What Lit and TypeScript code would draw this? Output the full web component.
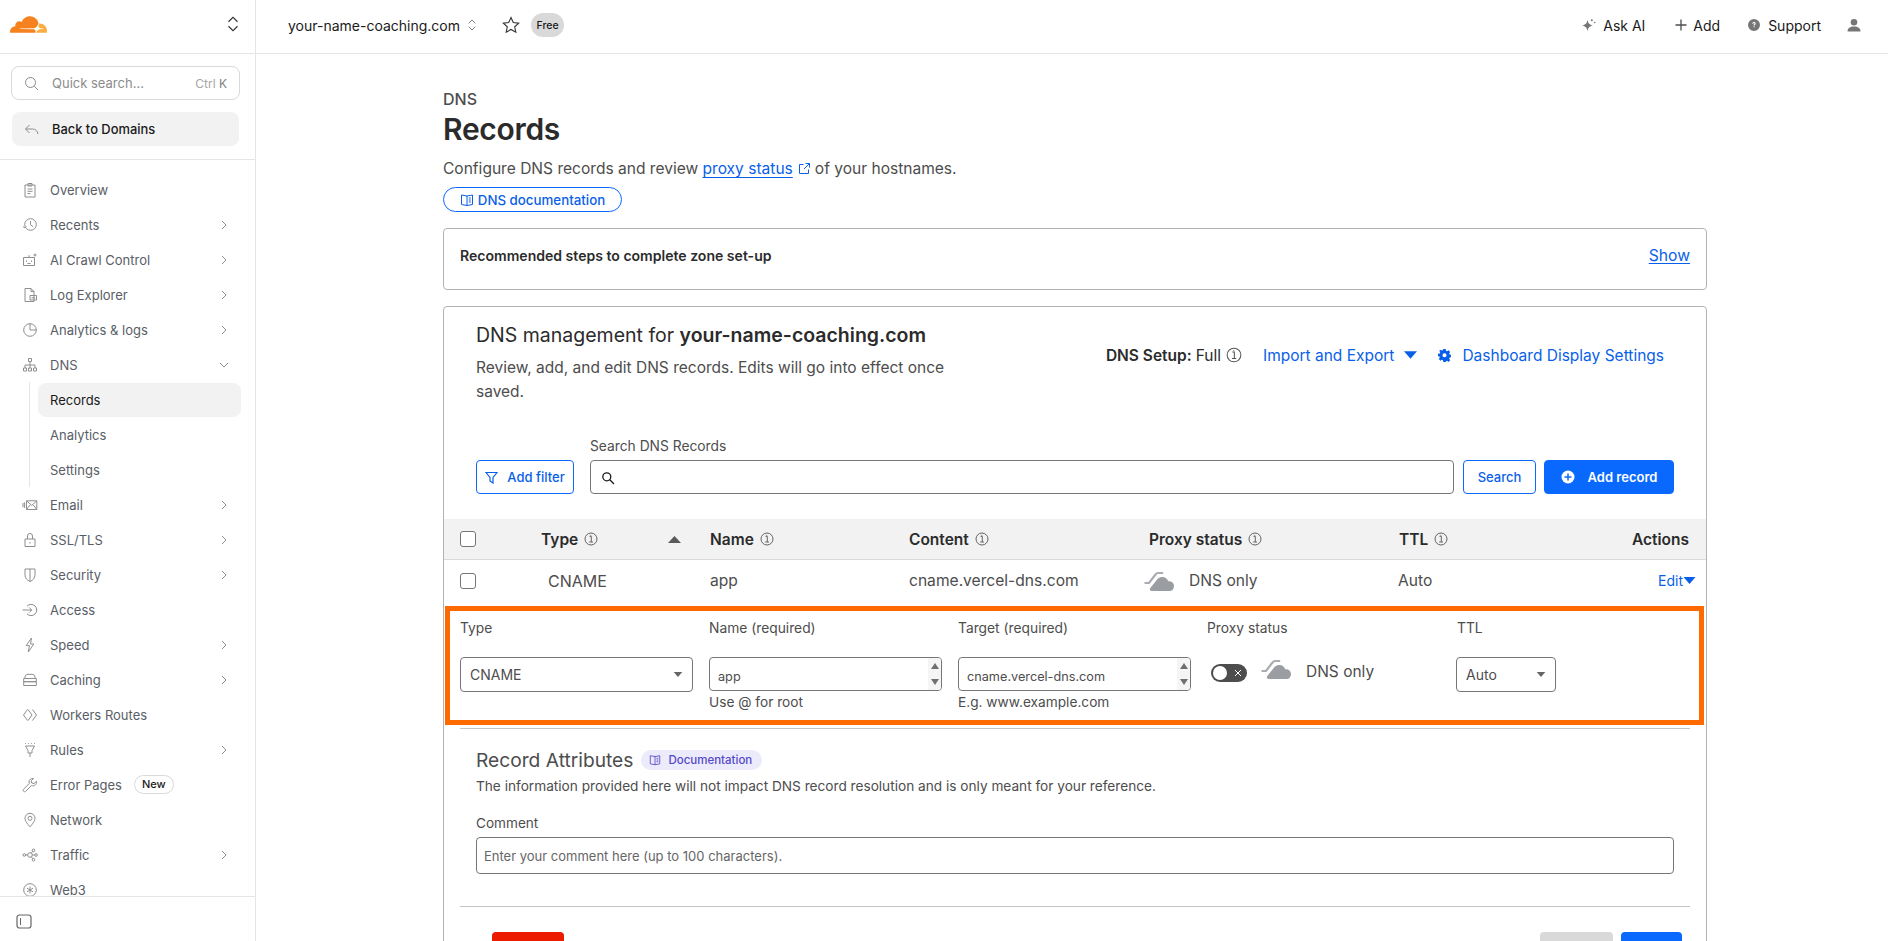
import { LitElement, html, css, svg } from 'lit';
import { customElement } from 'lit/decorators.js';

const navIcons: Record<string, unknown> = {
  overview: svg`<path d="M3 3h10v12H3zM6 1.500h4V4H6zM5.500 7h5M5.500 9.300h5M5.500 11.600h3"/>`,
  recents: svg`<circle cx="8.500" cy="7.500" r="5.800"/><path d="M8.500 4v3.800l2.600 1.800M1 9.500l1.800 1.400 1.600-1.600"/>`,
  ai: svg`<path d="M1.500 5.500h11v8h-11zM7 5.500V3.200M4.500 8.500v1.400M9.500 8.500v1.400M5.500 11.500h3M13 1.500v3M11.500 3h3"/>`,
  log: svg`<path d="M3 1.500h6l3 3v10H3zM9 1.500v3h3M8 8.500h6.500v4.500H8z"/><path d="M9.500 10.800h3.500"/>`,
  analytics: svg`<circle cx="8" cy="8" r="6.300"/><path d="M8 1.700V8h6.300"/>`,
  dns: svg`<path d="M6.500 1.500h3v3h-3zM8 4.500v3.500M3 11V8h10v3M8 8v3M1.500 11h3v3h-3zM6.500 11h3v3h-3zM11.500 11h3v3h-3z"/>`,
  email: svg`<path d="M4.500 3.800h10.300v8.700H4.500zM4.500 3.800l5.200 4.600 5.100-4.600M4.500 12.500l3.600-4.600M14.800 12.500l-3.600-4.600M1 6v4.200M2.600 5.300v5.600"/>`,
  ssl: svg`<path d="M3 7h10v7.500H3zM5.500 7V4a2.500 2.500 0 0 1 5 0v3M8 10v1.500"/>`,
  security: svg`<path d="M3 2h10v5.800c0 3.400-2.200 5.600-5 6.700-2.800-1.100-5-3.300-5-6.700zM8 2v12.500"/>`,
  access: svg`<path d="M5 4.200a5.600 5.600 0 1 1 0 7.600M.5 8h9M7.300 5.500 9.800 8l-2.500 2.500"/>`,
  speed: svg`<path d="M9.500 1 4.200 8.600h3.300L6.300 15l5.500-8H8.500z"/>`,
  caching: svg`<path d="M3 6.500V5c0-1.600 1.500-2.700 3-2.700h4c1.500 0 3 1.100 3 2.700v1.500zM1.700 6.500h12.600v3.200H1.700zM1.700 9.700h12.600v3.800H1.700z"/>`,
  workers: svg`<path d="m5.500 2.500-4 5.500 4 5.500M10.500 2.500l4 5.500-4 5.500M6 2.500 10 8l-4 5.500"/>`,
  rules: svg`<path d="M3.500 4h9L10 8.500V11H6V8.500zM8 11v4M3 1.500h.8M6 1.500h.8M9.200 1.500h.8M12.200 1.500h.8"/>`,
  error: svg`<path d="M14.500 4.200l-2.500 2.300-2.300-.5-.5-2.300 2.300-2.200c-2.300-.5-4.500 1.200-4.500 3.500 0 .6.100 1 .3 1.500l-5.700 5.700c-.6.600-.6 1.500 0 2.100s1.500.6 2.100 0l5.700-5.700c2.800 1 5.600-1.200 5.100-4.200z"/>`,
  network: svg`<path d="M8 14.800C5.500 11.800 3 9.300 3 6.300a5 5 0 0 1 10 0c0 3-2.500 5.500-5 8.500z"/><circle cx="8" cy="6.300" r="2"/>`,
  traffic: svg`<circle cx="2.300" cy="8" r="1.300"/><circle cx="8" cy="8" r="2.300"/><circle cx="11.500" cy="3.300" r="1.300"/><circle cx="11.500" cy="12.700" r="1.300"/><circle cx="14" cy="8" r="1.300"/><path d="M3.600 8h2.100M9.400 6.200l1.300-1.900M9.400 9.800l1.300 1.900M10.300 8h2.400"/>`,
  web3: svg`<circle cx="8" cy="8" r="6.300"/><path d="M8 4.500v7M5 6.200l6 3.600M11 6.200 5 9.800"/>`,
};

interface NavItem {
  icon: string;
  label: string;
  chevron?: boolean;
  badge?: string;
}

const navTop: NavItem[] = [
  { icon: 'overview', label: 'Overview' },
  { icon: 'recents', label: 'Recents', chevron: true },
  { icon: 'ai', label: 'AI Crawl Control', chevron: true },
  { icon: 'log', label: 'Log Explorer', chevron: true },
  { icon: 'analytics', label: 'Analytics & logs', chevron: true },
];

const navBottom: NavItem[] = [
  { icon: 'email', label: 'Email', chevron: true },
  { icon: 'ssl', label: 'SSL/TLS', chevron: true },
  { icon: 'security', label: 'Security', chevron: true },
  { icon: 'access', label: 'Access' },
  { icon: 'speed', label: 'Speed', chevron: true },
  { icon: 'caching', label: 'Caching', chevron: true },
  { icon: 'workers', label: 'Workers Routes' },
  { icon: 'rules', label: 'Rules', chevron: true },
  { icon: 'error', label: 'Error Pages', badge: 'New' },
  { icon: 'network', label: 'Network' },
  { icon: 'traffic', label: 'Traffic', chevron: true },
  { icon: 'web3', label: 'Web3' },
];

const info = html`<svg class="info" viewBox="0 0 14 14"><circle cx="7" cy="7" r="6"/><path d="M5.500 4.300h1.800v5.600M5.200 10h3.800M6.800 2.800v.7"/></svg>`;

const book = html`<svg class="book" viewBox="0 0 14 14"><path d="M7 3 1.500 2v9.500L7 12.500l5.500-1V2zM7 3v9.500M8.800 5h2M8.800 7h2M8.800 9h2"/></svg>`;

const grayCloud = html`<svg class="cloud" viewBox="0 0 32 22">
  <path d="M9 21c-2 0-2.800-1.700-1.700-3l6-7.500c1.500-2 3.200-3.500 6-3.500 3 0 5.200 2 6 4.300 3-.3 5.700 1.700 5.700 4.700 0 3-2 5-4.200 5z" fill="#9a9ea3"/>
  <path d="M1.500 13h4.500l6.500-8.500c.8-1 1.500-1.500 2.700-1.500h5" fill="none" stroke="#a9adb2" stroke-width="2.200"/>
</svg>`;

const caret = html`<svg class="caret" viewBox="0 0 12 7"><path d="M0 0h12L6 7z"/></svg>`;

@customElement('app-root')
export class AppRoot extends LitElement {
  static styles = css`
    :host {
      display: block;
      height: 941px;
      overflow: hidden;
      font-family: Inter, 'Noto Sans', sans-serif;
      color: #313131;
      background: #fff;
    }
    a {
      color: inherit;
      text-decoration: none;
    }
    .page {
      display: grid;
      grid-template-columns: 256px 1fr;
      height: 941px;
    }

    /* sidebar */
    .side {
      display: flex;
      flex-direction: column;
      height: 941px;
      border-right: 1px solid #e5e5e5;
      box-sizing: border-box;
    }
    .side-head {
      height: 54px;
      flex: none;
      box-sizing: border-box;
      border-bottom: 1px solid #e5e5e5;
      display: flex;
      align-items: center;
      justify-content: space-between;
      padding: 0 15px 5px 10px;
    }
    .logo {
      width: 37px;
      height: 17px;
    }
    .updown {
      width: 14px;
      height: 18px;
      fill: none;
      stroke: #333;
      stroke-width: 1;
    }
    .side-tools {
      flex: none;
      box-sizing: border-box;
      height: 106px;
      border-bottom: 1px solid #e5e5e5;
      padding: 12px 15px 0 11px;
    }
    .quick {
      box-sizing: border-box;
      height: 34px;
      border: 1px solid #d9d9d9;
      border-radius: 8px;
      display: flex;
      align-items: center;
      padding: 0 12px;
      font-size: 13px;
      color: #8c8c8c;
    }
    .quick svg,
    .back svg {
      width: 15px;
      height: 15px;
      fill: none;
      stroke: #8c8c8c;
      stroke-width: 1;
      flex: none;
      margin-right: 13px;
    }
    .quick .keys {
      margin-left: auto;
      font-size: 12px;
      color: #a6a6a6;
    }
    .quick .keys b {
      font-weight: 400;
      color: #808080;
    }
    .back {
      box-sizing: border-box;
      margin: 12px 1px 0 1px;
      height: 34px;
      background: #f2f2f2;
      border-radius: 8px;
      display: flex;
      align-items: center;
      padding: 0 12px;
      font-size: 12.900px;
      font-weight: 500;
      color: #1a1a1a;
    }
    .nav {
      flex: 1;
      min-height: 0;
      overflow: hidden;
      padding-top: 12px;
    }
    .item {
      height: 35px;
      display: flex;
      align-items: center;
      padding: 0 27px 0 22px;
      font-size: 13px;
      color: #595e66;
      box-sizing: border-box;
    }
    .item .ico {
      width: 16px;
      height: 16px;
      flex: none;
      margin-right: 12px;
      fill: none;
      stroke: #8e8e8e;
      stroke-width: 1;
    }
    .item .chev {
      width: 8px;
      height: 12px;
      margin-left: auto;
      fill: none;
      stroke: #8e8e8e;
      stroke-width: 1;
    }
    .item .chev.down {
      width: 12px;
      height: 8px;
      margin-right: -2px;
    }
    .new {
      margin-left: 12px;
      height: 19px;
      box-sizing: border-box;
      padding: 0 7px;
      border: 1px solid #d9d9d9;
      border-radius: 10px;
      font-size: 11px;
      font-weight: 500;
      line-height: 17px;
      color: #1a1a1a;
    }
    .sub {
      margin-left: 29px;
      border-left: 1px solid #e5e5e5;
      display: flex;
      flex-direction: column;
      height: 105px;
      box-sizing: border-box;
      padding-top: 1px;
    }
    .sub a {
      flex: none;
      height: 35px;
      margin-left: 8px;
      margin-right: 14px;
      padding-left: 12px;
      display: flex;
      align-items: center;
      font-size: 13px;
      color: #595e66;
      border-radius: 8px;
      box-sizing: border-box;
    }
    .sub a.on {
      height: 34px;
      background: #f2f2f2;
      color: #1a1a1a;
    }
    .side-foot {
      flex: none;
      height: 45px;
      border-top: 1px solid #e5e5e5;
      padding: 17px 0 0 16px;
      box-sizing: border-box;
    }
    .side-foot svg {
      display: block;
      width: 16px;
      height: 15px;
      fill: none;
      stroke: #666;
      stroke-width: 1;
    }

    /* top bar */
    .right {
      min-width: 0;
      height: 941px;
      overflow: hidden;
    }
    .top {
      height: 54px;
      box-sizing: border-box;
      border-bottom: 1px solid #e5e5e5;
      display: flex;
      align-items: center;
      padding: 0 27px 3px 32px;
      font-size: 14px;
      color: #1a1a1a;
    }
    .top .updown {
      width: 10px;
      height: 14px;
      margin-left: 7px;
      stroke: #666;
    }
    .star {
      width: 18px;
      height: 18px;
      margin-left: 25px;
      fill: none;
      stroke: #333;
      stroke-width: 1.100;
    }
    .free {
      margin-left: 11px;
      width: 33px;
      height: 24px;
      border-radius: 12px;
      background: #d9d9d9;
      display: flex;
      align-items: center;
      justify-content: center;
      font-size: 10.500px;
      font-weight: 500;
    }
    .top-links {
      margin-left: auto;
      display: flex;
      align-items: center;
    }
    .top-links a {
      display: flex;
      align-items: center;
    }
    .top-links svg {
      width: 14px;
      height: 14px;
      margin-right: 7px;
      fill: #767676;
    }
    .top-links .plain {
      margin-right: 5px;
      fill: none;
      stroke: #4d4d4d;
      stroke-width: 1.300;
    }
    .top-links a + a {
      margin-left: 27px;
    }
    .top-links a.add {
      margin-left: 29px;
    }
    .top-links .user {
      margin: 0 0 0 26px;
    }

    /* content */
    .content {
      width: 1264px;
      margin-left: 187px;
    }
    .crumb {
      margin-top: 36px;
      font-size: 16px;
      font-weight: 500;
      line-height: 18px;
      color: #4d4d4d;
    }
    h1 {
      margin: 1px 0 0;
      font-size: 30px;
      line-height: 40px;
      font-weight: 600;
      color: #2b2b2b;
      letter-spacing: -0.3px;
    }
    .lead {
      margin: 9px 0 0;
      font-size: 15.550px;
      line-height: 22px;
      color: #4d4d4d;
    }
    .lead a {
      color: #0a5fe8;
      text-decoration: underline;
      text-underline-offset: 3px;
    }
    .lead .ext {
      width: 13px;
      height: 13px;
      margin: 0 4px 0 5px;
      vertical-align: -1px;
      fill: none;
      stroke: #0a5fe8;
      stroke-width: 1;
    }
    .pill {
      margin-top: 7px;
      display: flex;
      align-items: center;
      justify-content: center;
      width: 179px;
      height: 25px;
      box-sizing: border-box;
      border: 1px solid #0969ff;
      border-radius: 13px;
      color: #0a5fe8;
      font-size: 13.300px;
      font-weight: 500;
    }
    .book {
      width: 14px;
      height: 14px;
      flex: none;
      margin-right: 4px;
      fill: none;
      stroke: currentColor;
      stroke-width: 1;
    }
    .steps {
      margin-top: 16px;
      height: 62px;
      box-sizing: border-box;
      border: 1px solid #b3b3b3;
      border-radius: 4px;
      padding: 0 16px 8px;
      display: flex;
      justify-content: space-between;
      align-items: center;
      font-size: 14.050px;
      font-weight: 600;
      color: #2b2b2b;
    }
    .steps a {
      font-size: 15.700px;
      font-weight: 400;
      color: #0a5fe8;
      text-decoration: underline;
      text-underline-offset: 2px;
    }
    .card {
      margin-top: 16px;
      height: 800px;
      border: 1px solid #b3b3b3;
      border-radius: 4px;
      box-sizing: border-box;
    }
    .card-head {
      height: 90px;
      padding: 14px 42px 0 32px;
      box-sizing: border-box;
      display: flex;
      justify-content: space-between;
    }
    .card-head h2 {
      margin: 0;
      font-size: 19.500px;
      line-height: 28px;
      font-weight: 400;
      color: #2b2b2b;
    }
    .card-head h2 b {
      font-weight: 600;
    }
    .card-head p {
      margin: 7px 0 0;
      width: 490px;
      font-size: 15.500px;
      line-height: 24px;
      color: #4d4d4d;
    }
    .setup {
      margin-top: 23px;
      display: flex;
      align-items: center;
      font-size: 15.500px;
      height: 22px;
      color: #2b2b2b;
    }
    .setup b {
      font-weight: 600;
      margin-right: 4px;
    }
    .setup .info {
      width: 16px;
      height: 16px;
      margin-left: 5px;
    }
    .setup .lnk {
      color: #0a5fe8;
    }
    .setup .lnk.first {
      margin-left: 21px;
    }
    .setup .caret {
      width: 13px;
      height: 8px;
      margin: 0 21px 0 10px;
      fill: #0a5fe8;
    }
    .setup .gear {
      width: 13px;
      height: 13px;
      fill: #0a5fe8;
      margin-right: 11px;
    }
    .info {
      width: 14px;
      height: 14px;
      flex: none;
      fill: none;
      stroke: #555;
      stroke-width: 0.900;
    }
    .search-row {
      margin: 40px 0 0 32px;
      display: flex;
      align-items: flex-end;
    }
    .btn {
      box-sizing: border-box;
      height: 34px;
      border: 1px solid #0969ff;
      border-radius: 4px;
      display: flex;
      align-items: center;
      justify-content: center;
      color: #0a5fe8;
      font-size: 13px;
      font-weight: 500;
      background: #fff;
    }
    .btn.filter {
      width: 98px;
      margin-right: 16px;
    }
    .btn.filter svg {
      width: 13px;
      height: 13px;
      margin-right: 9px;
      fill: none;
      stroke: #0a5fe8;
      stroke-width: 1.200;
    }
    .search-field {
      width: 864px;
      margin-right: 9px;
    }
    .search-field label {
      display: block;
      font-size: 13.800px;
      line-height: 18px;
      margin-bottom: 5px;
      color: #4d4d4d;
    }
    .search-box {
      box-sizing: border-box;
      height: 34px;
      border: 1px solid #767676;
      border-radius: 4px;
      display: flex;
      align-items: center;
      padding: 2px 0 0 10px;
    }
    .search-box svg {
      width: 14px;
      height: 14px;
      fill: none;
      stroke: #1a1a1a;
      stroke-width: 1.300;
    }
    .btn.search {
      width: 73px;
      margin-right: 8px;
    }
    .btn.add {
      width: 130px;
      background: #0969ff;
      border-color: #0969ff;
      color: #fff;
      font-weight: 600;
    }
    .btn.add svg {
      width: 14px;
      height: 14px;
      margin-right: 13px;
    }
    .grid-row {
      display: grid;
      grid-template-columns: 81px 169px 199px 240px 250px 1fr;
      align-items: center;
      padding: 0 17px 0 16px;
      font-size: 15.600px;
    }
    .thead {
      margin-top: 25px;
      height: 40px;
      background: #f2f2f2;
      border-bottom: 1px solid #d9d9d9;
      font-weight: 600;
      color: #2b2b2b;
      font-size: 15.500px;
    }
    .thead span {
      display: flex;
      align-items: center;
    }
    .thead .info {
      margin-left: 6px;
    }
    .thead .sort {
      width: 13px;
      height: 7px;
      margin-left: 70px;
      fill: #595959;
    }
    .split {
      display: flex;
      align-items: center;
      justify-content: space-between;
    }
    .check {
      box-sizing: border-box;
      display: block;
      width: 16px;
      height: 16px;
      border: 1px solid #767676;
      border-radius: 3px;
      background: #fff;
    }
    .tbody {
      height: 41px;
      color: #4d4d4d;
    }
    .tbody .t {
      padding-left: 7px;
      font-size: 16px;
    }
    .tbody .proxy {
      display: flex;
      align-items: center;
      margin-left: -6px;
    }
    .tbody .split {
      margin-left: -1px;
    }
    .cloud {
      width: 32px;
      height: 22px;
      flex: none;
      margin-right: 14px;
    }
    .tbody .edit {
      margin-right: -7px;
      display: flex;
      align-items: center;
      font-size: 14px;
      color: #0a5fe8;
    }
    .tbody .edit .caret {
      width: 13px;
      height: 7px;
      fill: #0a5fe8;
    }

    /* marked region */
    .edit-box {
      margin: 5px 0 0 1px;
      width: 1259px;
      height: 119px;
      box-sizing: border-box;
      border: 5px solid #ff6a00;
      padding: 8px 0 0 10px;
      display: grid;
      grid-template-columns: 249px 249px 249px 250px 1fr;
      font-size: 13.800px;
      color: #4d4d4d;
    }
    .edit-box label {
      display: block;
      height: 18px;
      line-height: 18px;
      margin-bottom: 20px;
    }
    .select {
      box-sizing: border-box;
      width: 233px;
      height: 35px;
      border: 1px solid #767676;
      border-radius: 4px;
      display: flex;
      align-items: center;
      justify-content: space-between;
      padding: 0 9px;
      font-size: 14px;
    }
    .select.small {
      width: 100px;
      margin-left: -1px;
    }
    .select .caret {
      width: 10px;
      height: 5px;
      fill: #666;
    }
    .spin {
      box-sizing: border-box;
      width: 233px;
      height: 34px;
      border: 1px solid #767676;
      border-radius: 4px;
      display: flex;
      align-items: center;
      justify-content: space-between;
      padding: 4px 0 0 8px;
      font-size: 12.700px;
    }
    .arrows {
      align-self: stretch;
      margin-top: -4px;
      width: 13px;
      display: flex;
      flex-direction: column;
      justify-content: space-between;
      align-items: center;
      padding: 5px 0;
      box-sizing: border-box;
      background: #f5f5f5;
      border-radius: 0 3px 3px 0;
    }
    .arrows svg {
      width: 8px;
      height: 6px;
      fill: #707070;
    }
    .hint {
      margin-top: 2px;
      font-size: 13.700px;
      line-height: 18px;
    }
    .ctl {
      display: flex;
      align-items: flex-start;
      font-size: 15.500px;
      padding-left: 4px;
    }
    .toggle {
      box-sizing: border-box;
      width: 36px;
      height: 18px;
      margin-top: 7px;
      margin-right: 13px;
      border-radius: 9px;
      background: #4d4d4d;
      padding: 2px;
      display: flex;
      align-items: center;
      justify-content: space-between;
      flex: none;
    }
    .toggle i {
      width: 14px;
      height: 14px;
      border-radius: 7px;
      background: #fff;
    }
    .toggle svg {
      width: 8px;
      height: 8px;
      margin-right: 3px;
      stroke: #fff;
      stroke-width: 1;
    }
    .ctl .cloud {
      margin-top: 1px;
    }
    .ctl span {
      margin-top: 5px;
      line-height: 20px;
    }

    .rule {
      margin: 3px 16px 0;
      border-top: 1px solid #c4c4c4;
    }
    .rule.flush {
      margin-top: 0;
    }
    .attrs {
      padding: 19px 32px 0;
      height: 177px;
      box-sizing: border-box;
    }
    .attrs-title {
      display: flex;
      align-items: center;
      font-size: 19.200px;
      line-height: 24px;
      color: #4d4d4d;
    }
    .purple {
      margin-left: 8px;
      height: 20px;
      width: 121px;
      box-sizing: border-box;
      border-radius: 10px;
      background: #ecebfb;
      color: #5447c9;
      font-size: 11.500px;
      font-weight: 500;
      display: flex;
      align-items: center;
      padding-left: 8px;
    }
    .purple .book {
      width: 12px;
      height: 12px;
      margin-right: 7px;
    }
    .attrs p {
      margin: 4px 0 0;
      font-size: 13.650px;
      line-height: 20px;
      color: #4d4d4d;
    }
    .attrs label {
      display: block;
      margin-top: 18px;
      font-size: 13.600px;
      line-height: 18px;
      color: #4d4d4d;
    }
    .attrs .area {
      margin-top: 5px;
      box-sizing: border-box;
      width: 1198px;
      height: 37px;
      border: 1px solid #767676;
      border-radius: 4px;
      display: flex;
      align-items: center;
      padding: 0 7px;
      font-size: 13px;
      color: #666;
    }
    .actions {
      padding: 25px 24px 0 48px;
      display: flex;
    }
    .actions i {
      display: block;
      height: 60px;
      border-radius: 4px;
    }
    .actions .del {
      width: 72px;
      background: #ec1c00;
    }
    .actions .cancel {
      width: 73px;
      margin-left: auto;
      background: #d9d9d9;
    }
    .actions .save {
      width: 61px;
      margin-left: 8px;
      background: #0969ff;
    }
  `;

  renderItem(it: NavItem) {
    return html`<a class="item">
      <svg class="ico" viewBox="0 0 16 16">${navIcons[it.icon]}</svg>
      <span>${it.label}</span>
      ${it.badge ? html`<span class="new">${it.badge}</span>` : ''}
      ${it.chevron
        ? html`<svg class="chev" viewBox="0 0 8 12"><path d="m2 2 4 4-4 4"/></svg>`
        : ''}
    </a>`;
  }

  renderSidebar() {
    return html`<aside class="side">
      <div class="side-head">
        <svg class="logo" viewBox="0 6.500 24 11">
          <path fill="#f6821f" d="M16.5088 16.8447c.1475-.5068.0908-.9707-.1553-1.3154-.2246-.3164-.6045-.499-1.0615-.5205l-8.6592-.1123a.1559.1559 0 0 1-.1333-.0713c-.0283-.042-.0351-.0986-.021-.1553.0278-.084.1123-.1484.2036-.1562l8.7359-.1123c1.0351-.0489 2.1601-.8868 2.5537-1.9136l.499-1.3013c.0215-.0561.0293-.1128.0147-.168-.5625-2.5463-2.835-4.4453-5.5499-4.4453-2.5039 0-4.6284 1.6177-5.3876 3.8614-.4927-.3658-1.1187-.5625-1.794-.499-1.2026.119-2.1665 1.083-2.2861 2.2856-.0283.31-.0069.6128.0635.894C1.5683 13.171 0 14.7754 0 16.752c0 .1748.0142.3515.0352.5273.0141.083.0844.1475.1689.1475h15.9814c.0909 0 .1758-.0645.2032-.1553l.12-.4268z"/>
          <path fill="#fbad41" d="M19.2656 11.2813c-.0771 0-.1611 0-.2383.0112-.0566 0-.1054.0415-.127.0976l-.3378 1.1744c-.1475.5068-.0918.9707.1543 1.3164.2256.3164.6055.498 1.0625.5195l1.8437.1133c.0557 0 .1055.0263.1329.0703.0283.043.0351.1074.0214.1562-.0283.084-.1132.1485-.204.1553l-1.921.1123c-1.041.0488-2.1582.8867-2.5527 1.914l-.1406.3585c-.0283.0713.0215.1416.0986.1416h6.5977c.0771 0 .1474-.0489.169-.126.1122-.4082.1757-.837.1757-1.2803 0-2.6025-2.125-4.727-4.7344-4.727"/>
        </svg>
        <svg class="updown" viewBox="0 0 12 16"><path d="m2 6 4-4 4 4M2 10l4 4 4-4"/></svg>
      </div>
      <div class="side-tools">
        <div class="quick">
          <svg viewBox="0 0 15 15"><circle cx="6.500" cy="6.500" r="5"/><path d="m10.300 10.300 3.700 3.700"/></svg>
          <span>Quick search...</span>
          <span class="keys">Ctrl <b>K</b></span>
        </div>
        <div class="back">
          <svg viewBox="0 0 15 15"><path d="M5.500 3 1.500 7l4 4M1.500 7h7c3 0 5 2 5.500 5"/></svg>
          <span>Back to Domains</span>
        </div>
      </div>
      <nav class="nav">
        ${navTop.map((it) => this.renderItem(it))}
        <a class="item">
          <svg class="ico" viewBox="0 0 16 16">${navIcons.dns}</svg>
          <span>DNS</span>
          <svg class="chev down" viewBox="0 0 12 8"><path d="m2 2 4 4 4-4"/></svg>
        </a>
        <div class="sub">
          <a class="on">Records</a>
          <a>Analytics</a>
          <a>Settings</a>
        </div>
        ${navBottom.map((it) => this.renderItem(it))}
      </nav>
      <div class="side-foot">
        <svg viewBox="0 0 16 15"><rect x="1" y="1" width="14" height="13" rx="2.500" stroke-width="1.200"/><path d="M4.500 4v7"/></svg>
      </div>
    </aside>`;
  }

  renderTop() {
    return html`<header class="top">
      <span>your-name-coaching.com</span>
      <svg class="updown" viewBox="0 0 12 16"><path d="m2 6 4-4 4 4M2 10l4 4 4-4"/></svg>
      <svg class="star" viewBox="0 0 18 18"><path d="m9 1.500 2.300 5 5.400.6-4 3.700 1.100 5.400L9 13.500l-4.800 2.700 1.100-5.400-4-3.700 5.400-.6z"/></svg>
      <span class="free">Free</span>
      <div class="top-links">
        <a>
          <svg viewBox="0 0 14 14"><path d="M5.500 1.800c.5 3.600 2 5 5.500 5.700-3.500.7-5 2.100-5.500 5.700-.5-3.600-2-5-5.500-5.700 3.500-.7 5-2.100 5.500-5.700z"/><circle cx="9.800" cy="2.300" r="1"/><circle cx="12.800" cy="4.500" r=".8"/></svg>
          Ask AI
        </a>
        <a class="add">
          <svg class="plain" viewBox="0 0 14 14"><path d="M7 1.500v11M1.500 7h11"/></svg>
          Add
        </a>
        <a>
          <svg viewBox="0 0 14 14"><path fill-rule="evenodd" d="M7 1a6 6 0 1 1 0 12A6 6 0 0 1 7 1zM5.300 5.700h1.100c0-.5.200-.8.600-.8s.6.300.6.600c0 .7-1.100.8-1.100 2.100h1c0-.9 1.200-1 1.200-2.200 0-.9-.7-1.500-1.700-1.500-1.100 0-1.700.7-1.700 1.800zm1.200 2.600v1h1.100v-1z"/></svg>
          Support
        </a>
        <svg class="user" viewBox="0 0 14 14"><circle cx="7" cy="4.300" r="3.300"/><path d="M.5 13.500c0-3.200 2.500-5 6.500-5s6.500 1.800 6.500 5z"/></svg>
      </div>
    </header>`;
  }

  renderArrows() {
    return html`<span class="arrows">
      <svg viewBox="0 0 8 6"><path d="M4 0 8 6H0z"/></svg>
      <svg viewBox="0 0 8 6"><path d="M0 0h8L4 6z"/></svg>
    </span>`;
  }

  renderMain() {
    return html`<main class="content">
      <div class="crumb">DNS</div>
      <h1>Records</h1>
      <p class="lead">
        Configure DNS records and review <a>proxy status</a
        ><svg class="ext" viewBox="0 0 13 13"><path d="M5.500 2.500h-4v9h9v-4M7.500 1.500h4v4M11.500 1.500 6 7"/></svg>of your hostnames.
      </p>
      <a class="pill">${book}DNS documentation</a>
      <div class="steps">
        <span>Recommended steps to complete zone set-up</span>
        <a>Show</a>
      </div>
      <section class="card">
        <div class="card-head">
          <div>
            <h2>DNS management for <b>your-name-coaching.com</b></h2>
            <p>Review, add, and edit DNS records. Edits will go into effect once saved.</p>
          </div>
          <div class="setup">
            <b>DNS Setup:</b> Full ${info}
            <a class="lnk first">Import and Export</a>
            <svg class="caret" viewBox="0 0 12 7"><path d="M0 0h12L6 7z"/></svg>
            <svg class="gear" viewBox="0 0 16 16"><path fill-rule="evenodd" d="M6.500 0h3l.4 2.200 1.300.6L13 1.500l2 2.200-1.200 1.800.5 1.300 2.200.4v3l-2.200.4-.5 1.300 1.200 1.800-2 2.200-1.800-1.300-1.300.6L9.500 16h-3l-.4-2.200-1.300-.6L3 14.500l-2-2.200 1.200-1.800-.5-1.300L0 8.800v-3l2.200-.4.500-1.300L1.500 2.300 3.500 1l1.300.8 1.300-.6zM8 5.300a2.500 2.500 0 1 0 0 5 2.500 2.500 0 0 0 0-5z"/></svg>
            <a class="lnk">Dashboard Display Settings</a>
          </div>
        </div>
        <div class="search-row">
          <a class="btn filter">
            <svg viewBox="0 0 13 13"><path d="M1 1.500h11L8 6.500v5.500L5 10V6.500z"/></svg>
            Add filter
          </a>
          <div class="search-field">
            <label>Search DNS Records</label>
            <div class="search-box">
              <svg viewBox="0 0 14 14"><circle cx="5.800" cy="5.800" r="4"/><path d="m8.800 8.800 4.200 4.200"/></svg>
            </div>
          </div>
          <a class="btn search">Search</a>
          <a class="btn add">
            <svg viewBox="0 0 14 14"><circle cx="7" cy="7" r="6.500" fill="#fff"/><path d="M7 3.500v7M3.500 7h7" stroke="#0969ff" stroke-width="1.500"/></svg>
            Add record
          </a>
        </div>
        <div class="grid-row thead">
          <i class="check"></i>
          <span>Type ${info}<svg class="sort" viewBox="0 0 13 7"><path d="M6.500 0 13 7H0z"/></svg></span>
          <span>Name ${info}</span>
          <span>Content ${info}</span>
          <span>Proxy status ${info}</span>
          <div class="split">
            <span>TTL ${info}</span>
            <span>Actions</span>
          </div>
        </div>
        <div class="grid-row tbody">
          <i class="check"></i>
          <span class="t">CNAME</span>
          <span>app</span>
          <span>cname.vercel-dns.com</span>
          <span class="proxy">${grayCloud}DNS only</span>
          <div class="split">
            <span>Auto</span>
            <a class="edit">Edit${caret}</a>
          </div>
        </div>
        <div class="edit-box">
          <div>
            <label>Type</label>
            <div class="select">CNAME${caret}</div>
          </div>
          <div>
            <label>Name (required)</label>
            <div class="spin">app${this.renderArrows()}</div>
            <div class="hint">Use @ for root</div>
          </div>
          <div>
            <label>Target (required)</label>
            <div class="spin">cname.vercel-dns.com${this.renderArrows()}</div>
            <div class="hint">E.g. www.example.com</div>
          </div>
          <div>
            <label>Proxy status</label>
            <div class="ctl">
              <div class="toggle"><i></i><svg viewBox="0 0 8 8"><path d="m1 1 6 6M7 1 1 7"/></svg></div>
              ${grayCloud}<span>DNS only</span>
            </div>
          </div>
          <div>
            <label>TTL</label>
            <div class="select small">Auto${caret}</div>
          </div>
        </div>
        <div class="rule"></div>
        <div class="attrs">
          <div class="attrs-title">Record Attributes <a class="purple">${book}Documentation</a></div>
          <p>The information provided here will not impact DNS record resolution and is only meant for your reference.</p>
          <label>Comment</label>
          <div class="area">Enter your comment here (up to 100 characters).</div>
        </div>
        <div class="rule flush"></div>
        <div class="actions">
          <i class="del"></i>
          <i class="cancel"></i>
          <i class="save"></i>
        </div>
      </section>
    </main>`;
  }

  render() {
    return html`<div class="page">
      ${this.renderSidebar()}
      <div class="right">
        ${this.renderTop()}
        ${this.renderMain()}
      </div>
    </div>`;
  }
}
